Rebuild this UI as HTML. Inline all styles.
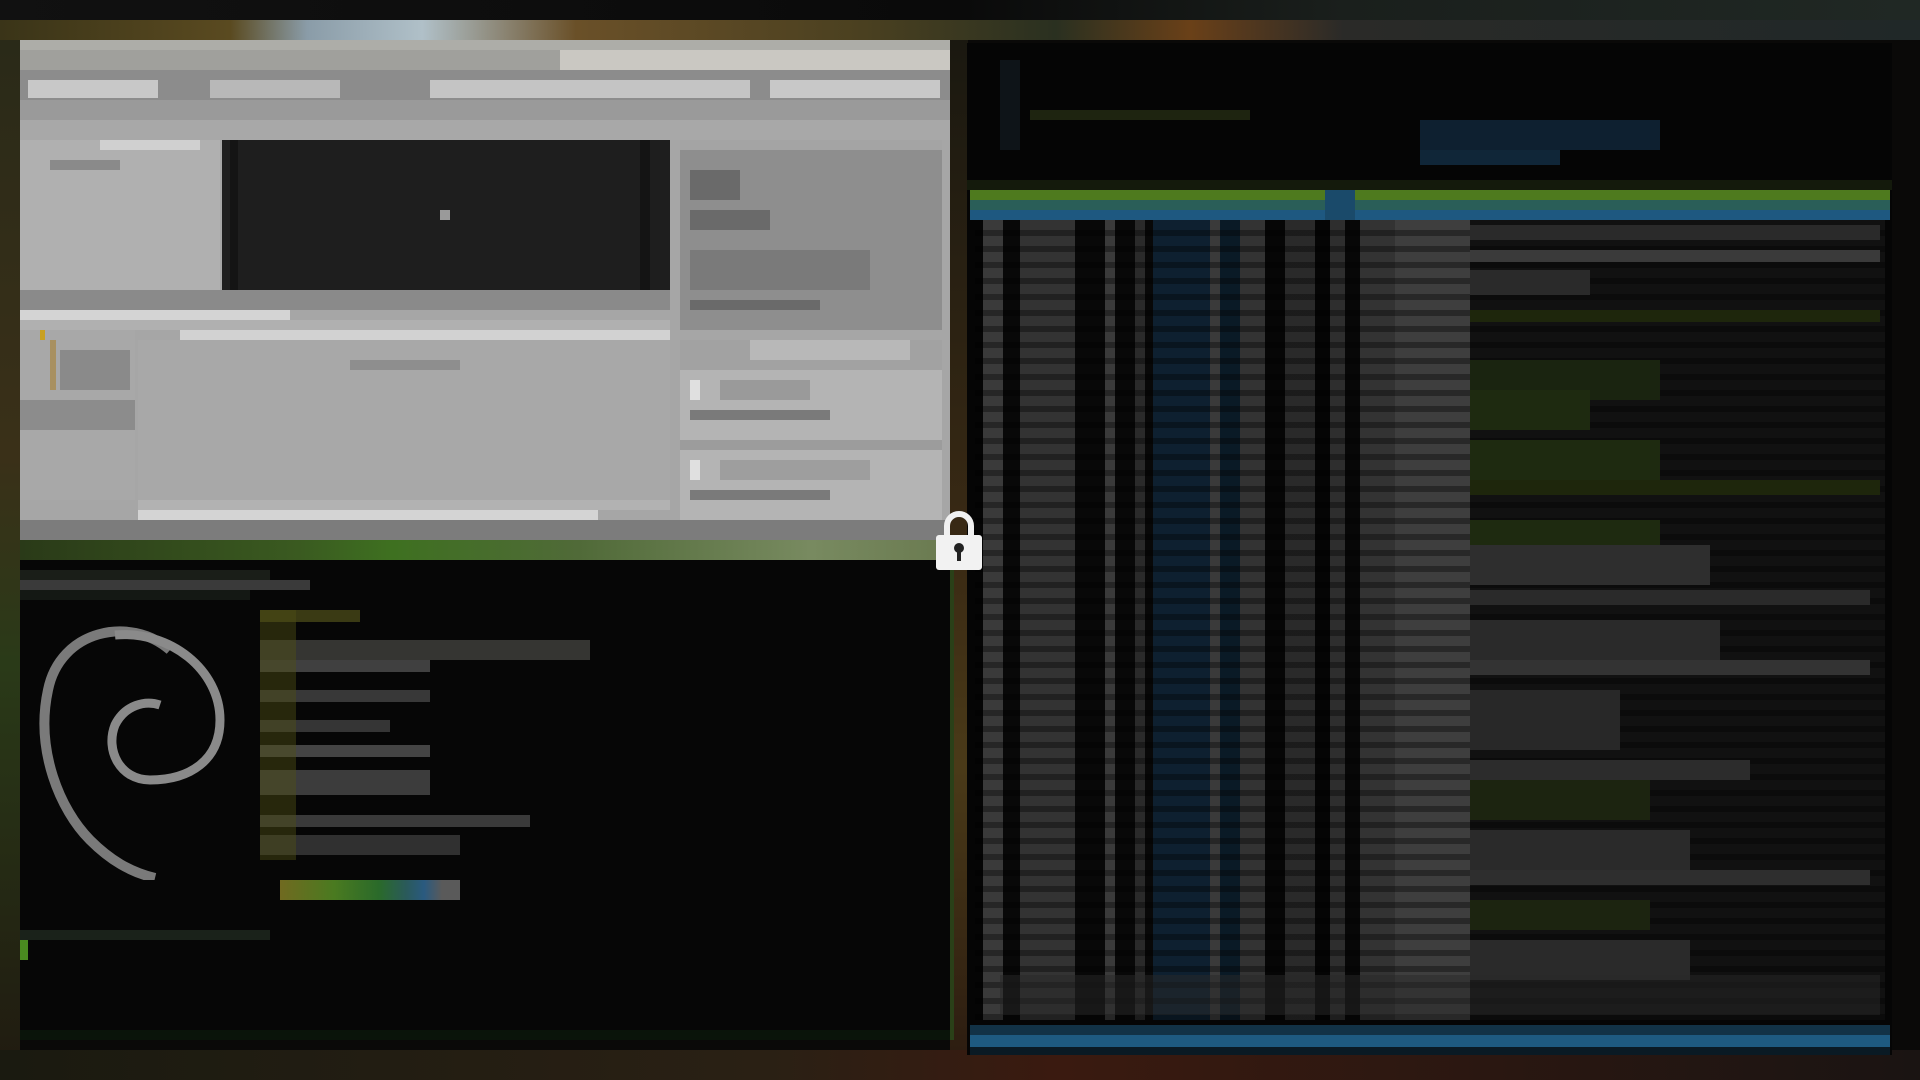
<!DOCTYPE html>
<html><head><meta charset="utf-8"><style>
*{margin:0;padding:0;box-sizing:border-box}
body{width:1920px;height:1080px;overflow:hidden;background:#0a0908;position:relative;font-family:"Liberation Sans",sans-serif}
div{position:absolute}
.g{background:#8a8a8a}
</style></head><body>
<!-- top wallpaper strip -->
<div style="left:0;top:0;width:1920px;height:20px;background:linear-gradient(90deg,#111 0,#0a0a0a 50%,#1a1f1c 70%,#202824 100%)"></div>
<div style="left:0;top:20px;width:1920px;height:20px;background:linear-gradient(90deg,#3a3418 0,#5a4a20 12%,#8a9ca8 16%,#b0c0c8 22%,#6a5028 30%,#4a4020 45%,#2a3020 55%,#6a4018 62%,#2a2a28 70%,#202828 100%)"></div>
<!-- side wallpaper -->
<div style="left:0;top:40px;width:20px;height:1040px;background:linear-gradient(180deg,#2a2a18,#3a3018 40%,#2a3a18 60%,#201a10)"></div>
<div style="left:950px;top:40px;width:18px;height:1040px;background:linear-gradient(180deg,#1a1810,#3a2a14 50%,#4a3a18 70%,#2a1a10)"></div>
<div style="left:0;top:1050px;width:1920px;height:30px;background:linear-gradient(90deg,#1a1a10,#2a2014 40%,#3a1a10 55%,#1a1412 100%)"></div>

<!-- top-left window -->
<div style="left:20px;top:40px;width:930px;height:500px;background:#a6a6a6"></div>
<div style="left:20px;top:40px;width:930px;height:10px;background:#adada8"></div>
<div style="left:20px;top:50px;width:540px;height:20px;background:#a0a09c"></div>
<div style="left:560px;top:50px;width:390px;height:20px;background:#cac8c2"></div>
<div style="left:20px;top:70px;width:930px;height:30px;background:#8c8c8c"></div>
<div style="left:28px;top:80px;width:130px;height:18px;background:#c8c8c8"></div>
<div style="left:210px;top:80px;width:130px;height:18px;background:#b8b8b8"></div>
<div style="left:430px;top:80px;width:320px;height:18px;background:#c4c4c4"></div>
<div style="left:770px;top:80px;width:170px;height:18px;background:#c8c8c8"></div>
<div style="left:20px;top:100px;width:930px;height:20px;background:#9a9a9a"></div>
<div style="left:20px;top:120px;width:930px;height:20px;background:#a8a8a8"></div>
<div style="left:20px;top:140px;width:200px;height:150px;background:#b0b0b0"></div>
<div style="left:100px;top:140px;width:100px;height:10px;background:#d0d0d0"></div>
<div style="left:50px;top:160px;width:70px;height:10px;background:#8a8a8a"></div>
<div style="left:222px;top:140px;width:448px;height:150px;background:#1e1e1e"></div>
<div style="left:230px;top:140px;width:8px;height:150px;background:#141414"></div>
<div style="left:640px;top:140px;width:10px;height:150px;background:#141414"></div>
<div style="left:440px;top:210px;width:10px;height:10px;background:#9a9a9a"></div>
<div style="left:680px;top:140px;width:262px;height:190px;background:#8e8e8e"></div>
<div style="left:680px;top:140px;width:262px;height:10px;background:#a4a4a4"></div>
<div style="left:690px;top:170px;width:50px;height:30px;background:#6a6a6a"></div>
<div style="left:690px;top:210px;width:80px;height:20px;background:#6a6a6a"></div>
<div style="left:690px;top:250px;width:180px;height:40px;background:#7a7a7a"></div>
<div style="left:690px;top:300px;width:130px;height:10px;background:#6a6a6a"></div>
<div style="left:20px;top:290px;width:650px;height:20px;background:#8a8a8a"></div>
<div style="left:20px;top:310px;width:270px;height:10px;background:#d4d4d4"></div>
<div style="left:20px;top:320px;width:650px;height:10px;background:#b0b0b0"></div>
<div style="left:20px;top:330px;width:115px;height:170px;background:#a8a8a8"></div>
<div style="left:40px;top:330px;width:5px;height:10px;background:#c8a020"></div>
<div style="left:50px;top:340px;width:6px;height:50px;background:#a89060"></div>
<div style="left:60px;top:350px;width:70px;height:40px;background:#8a8a8a"></div>
<div style="left:20px;top:400px;width:115px;height:30px;background:#8c8c8c"></div>
<div style="left:180px;top:330px;width:490px;height:10px;background:#d2d2d2"></div>
<div style="left:138px;top:340px;width:532px;height:160px;background:#a8a8a8"></div>
<div style="left:350px;top:360px;width:110px;height:10px;background:#8e8e8e"></div>
<div style="left:138px;top:500px;width:532px;height:10px;background:#b2b2b2"></div>
<div style="left:138px;top:510px;width:460px;height:10px;background:#d4d4d4"></div>
<div style="left:680px;top:340px;width:262px;height:30px;background:#a2a2a2"></div>
<div style="left:750px;top:340px;width:160px;height:20px;background:#b8b8b8"></div>
<div style="left:680px;top:370px;width:262px;height:70px;background:#b4b4b4"></div>
<div style="left:690px;top:380px;width:10px;height:20px;background:#e0e0e0"></div>
<div style="left:720px;top:380px;width:90px;height:20px;background:#9a9a9a"></div>
<div style="left:690px;top:410px;width:140px;height:10px;background:#7a7a7a"></div>
<div style="left:680px;top:440px;width:262px;height:10px;background:#9c9c9c"></div>
<div style="left:680px;top:450px;width:262px;height:70px;background:#b4b4b4"></div>
<div style="left:690px;top:460px;width:10px;height:20px;background:#e0e0e0"></div>
<div style="left:720px;top:460px;width:150px;height:20px;background:#9e9e9e"></div>
<div style="left:690px;top:490px;width:140px;height:10px;background:#7a7a7a"></div>
<div style="left:20px;top:520px;width:930px;height:20px;background:#7c7c7c"></div>

<!-- green strip -->
<div style="left:20px;top:540px;width:930px;height:20px;background:linear-gradient(90deg,#2a3a18,#3a5a20 30%,#3e7020 40%,#506a38 60%,#788a60 85%,#6a7a50)"></div>

<!-- bottom-left terminal -->
<div style="left:20px;top:560px;width:930px;height:480px;background:#060606"></div>
<div style="left:950px;top:560px;width:4px;height:480px;background:#2a4018"></div>
<div style="left:20px;top:1030px;width:930px;height:10px;background:#0a140a"></div>
<div style="left:20px;top:570px;width:250px;height:10px;background:#1a1e18"></div>
<div style="left:20px;top:580px;width:290px;height:10px;background:#3a3a3a"></div>
<div style="left:20px;top:590px;width:230px;height:10px;background:#141814"></div>
<!-- debian swirl -->
<svg style="position:absolute;left:20px;top:610px" width="220" height="270" viewBox="0 0 220 270">
<path d="M150 40 C110 5 40 20 28 80 C15 140 40 200 70 230 C90 250 110 262 135 268" fill="none" stroke="#7a7a7a" stroke-width="10"/>
<path d="M95 25 C150 20 200 60 200 110 C200 150 170 170 130 170 C100 170 85 140 95 115 C105 95 125 90 140 95" fill="none" stroke="#8a8a8a" stroke-width="9"/>
</svg>
<!-- info text blocks -->
<div style="left:260px;top:610px;width:100px;height:12px;background:#3a3a14"></div>
<div style="left:260px;top:640px;width:330px;height:20px;background:#353532"></div>
<div style="left:260px;top:660px;width:170px;height:12px;background:#404040"></div>
<div style="left:260px;top:690px;width:170px;height:12px;background:#383838"></div>
<div style="left:260px;top:720px;width:130px;height:12px;background:#353535"></div>
<div style="left:260px;top:745px;width:170px;height:12px;background:#444"></div>
<div style="left:260px;top:770px;width:170px;height:25px;background:#3c3c3c"></div>
<div style="left:260px;top:815px;width:270px;height:12px;background:#3a3a3a"></div>
<div style="left:260px;top:835px;width:200px;height:20px;background:#303030"></div>
<div style="left:260px;top:610px;width:36px;height:250px;background:rgba(80,80,20,.45)"></div>
<div style="left:280px;top:880px;width:180px;height:20px;background:linear-gradient(90deg,#706a20,#4a7a20 30%,#2a6a2a 55%,#2a5a5a 70%,#2a5a80 80%,#5a5a5a 90%)"></div>
<div style="left:20px;top:930px;width:250px;height:10px;background:#1a221a"></div>
<div style="left:20px;top:940px;width:8px;height:20px;background:#4a8a20"></div>

<!-- right htop terminal -->
<div style="left:967px;top:43px;width:925px;height:1012px;background:#050505"></div>
<div style="left:1000px;top:60px;width:20px;height:90px;background:#0e1418"></div>
<div style="left:1030px;top:110px;width:220px;height:10px;background:#1e2410"></div>
<div style="left:1420px;top:120px;width:240px;height:30px;background:#0e2030"></div>
<div style="left:1420px;top:150px;width:140px;height:15px;background:#102638"></div>
<div style="left:967px;top:180px;width:925px;height:10px;background:#141a0c"></div>
<div style="left:970px;top:190px;width:920px;height:10px;background:#4e7a1e"></div>
<div style="left:970px;top:200px;width:920px;height:10px;background:#2a5e58"></div>
<div style="left:970px;top:210px;width:920px;height:10px;background:#1e5880"></div>
<div style="left:1325px;top:190px;width:30px;height:30px;background:#1a4a6a"></div>
<!-- columns -->
<div style="left:975px;top:220px;width:910px;height:800px;background:
repeating-linear-gradient(180deg,rgba(0,0,0,0) 0 10px,rgba(0,0,0,.35) 10px 16px),
linear-gradient(90deg,#050505 0 8px,#3a3a3a 8px 28px,#080808 28px 45px,#333 45px 100px,#080808 100px 130px,#3a3a3a 130px 140px,#080808 140px 160px,#2a2a2a 160px 170px,#080808 170px 178px,#0e2030 178px 235px,#3a3a3a 235px 245px,#0a1a26 245px 265px,#333 265px 290px,#060606 290px 310px,#2a2a2a 310px 340px,#050505 340px 355px,#2e2e2e 355px 370px,#070707 370px 385px,#333 385px 420px,#3e3e3e 420px 495px,#111 495px 910px)"></div>
<div style="left:1470px;top:225px;width:410px;height:15px;background:#2a2a2a"></div>
<div style="left:1470px;top:250px;width:410px;height:12px;background:#3a3a3a"></div>
<div style="left:1470px;top:270px;width:120px;height:25px;background:#2a2a2a"></div>
<div style="left:1470px;top:310px;width:410px;height:12px;background:#1e260c"></div>
<div style="left:1470px;top:360px;width:190px;height:40px;background:#1a2410"></div>
<div style="left:1470px;top:390px;width:120px;height:40px;background:#1e2a10"></div>
<div style="left:1470px;top:440px;width:190px;height:40px;background:#1e2a10"></div>
<div style="left:1470px;top:480px;width:410px;height:15px;background:#1e260c"></div>
<div style="left:1470px;top:520px;width:190px;height:30px;background:#1e2a10"></div>
<div style="left:1470px;top:545px;width:240px;height:40px;background:#2e2e2e"></div>
<div style="left:1470px;top:590px;width:400px;height:15px;background:#2a2a2a"></div>
<div style="left:1470px;top:620px;width:250px;height:40px;background:#2a2a2a"></div>
<div style="left:1470px;top:660px;width:400px;height:15px;background:#333"></div>
<div style="left:1470px;top:690px;width:150px;height:60px;background:#282828"></div>
<div style="left:1470px;top:760px;width:280px;height:20px;background:#2c2c2c"></div>
<div style="left:1470px;top:780px;width:180px;height:40px;background:#1c2410"></div>
<div style="left:1470px;top:830px;width:220px;height:40px;background:#2a2a2a"></div>
<div style="left:1470px;top:870px;width:400px;height:15px;background:#2e2e2e"></div>
<div style="left:1470px;top:900px;width:180px;height:30px;background:#1c2410"></div>
<div style="left:1470px;top:940px;width:220px;height:40px;background:#2a2a2a"></div>
<div style="left:1000px;top:975px;width:880px;height:40px;background:rgba(40,40,40,.5)"></div>
<div style="left:970px;top:1025px;width:920px;height:10px;background:#123246"></div>
<div style="left:970px;top:1035px;width:920px;height:12px;background:#1e5a80"></div>
<div style="left:970px;top:1047px;width:920px;height:8px;background:#0a1a24"></div>

<!-- lock icon -->
<svg style="position:absolute;left:934px;top:508px" width="50" height="64" viewBox="0 0 50 64">
<path d="M13 28 V18 A12 12 0 0 1 37 18 V28" fill="none" stroke="#f0f0f0" stroke-width="6"/>
<rect x="2" y="27" width="46" height="35" rx="3" fill="#f2f2f2"/>
<circle cx="25" cy="40" r="5" fill="#222"/>
<rect x="23" y="42" width="4" height="11" fill="#222"/>
</svg>
</body></html>
